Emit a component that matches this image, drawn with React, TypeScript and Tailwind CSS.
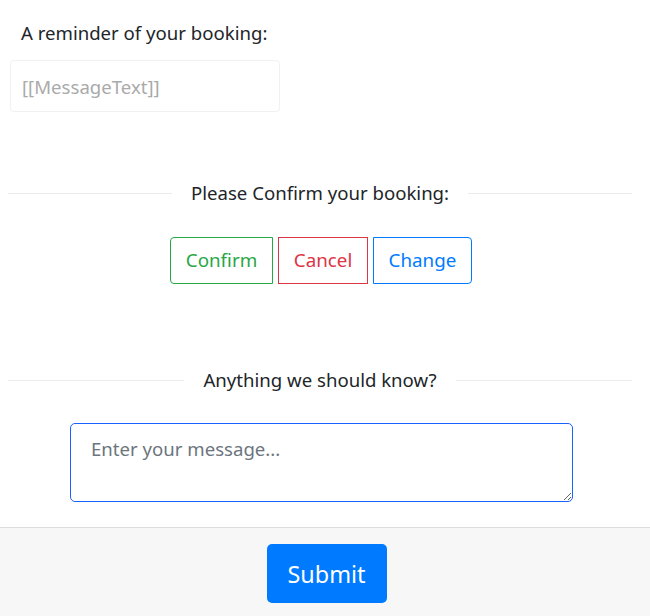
export default function App() {
  return (
    <div className="flex min-h-[616px] w-[650px] flex-col bg-white font-['Noto_Sans',sans-serif] text-[#212529]">
      <div className="flex-1 pl-[8px] pr-[18px]">
        {/* Reminder */}
        <p className="ml-[13px] mt-[20px] text-[18.6px] leading-[26px]">A reminder of your booking:</p>
        <div className="ml-[2px] mt-[14px] flex h-[52px] w-[270px] items-center rounded-[4px] border border-[#f1f1f1] px-[11px] pt-[2px] text-[18.6px] text-[#aaaaaa]">
          [[MessageText]]
        </div>

        {/* Confirm section */}
        <div className="mt-[68px] flex items-center gap-[19px]">
          <div className="h-px flex-1 bg-[#ececec]" />
          <span className="text-[18.6px] leading-[26px]">Please Confirm your booking:</span>
          <div className="h-px flex-1 bg-[#ececec]" />
        </div>
        <div className="mt-[31px] flex justify-center gap-[5px] pl-[2px]">
          <button className="h-[47px] w-[103px] rounded-l-[4px] border border-[#28a745] text-[18.8px] text-[#28a745]">Confirm</button>
          <button className="h-[47px] w-[90px] border border-[#dc3545] text-[18.8px] text-[#dc3545]">Cancel</button>
          <button className="h-[47px] w-[99px] rounded-r-[4px] border border-[#007bff] text-[18.8px] text-[#007bff]">Change</button>
        </div>

        {/* Message section */}
        <div className="mt-[83px] flex items-center gap-[19px]">
          <div className="h-px flex-1 bg-[#ececec]" />
          <span className="text-[18.6px] leading-[26px]">Anything we should know?</span>
          <div className="h-px flex-1 bg-[#ececec]" />
        </div>
        <div className="mt-[30px] flex pl-[62px]">
          <textarea
            placeholder="Enter your message..."
            className="h-[79px] w-[503px] rounded-[5px] border border-[#1a62ff] px-[20px] py-[12px] text-[18.6px] leading-[26px] text-[#495057] outline-none placeholder:text-[#6c757d]"
          />
        </div>
      </div>

      {/* Footer */}
      <div className="mt-[24px] flex h-[89px] items-start justify-center border-t border-[#dddddd] bg-[#f7f7f7] pl-[3px] pt-[16px]">
        <button className="h-[59px] w-[120px] rounded-[5px] bg-[#007bff] pt-[3px] text-[23.4px] text-white">Submit</button>
      </div>
    </div>
  );
}
